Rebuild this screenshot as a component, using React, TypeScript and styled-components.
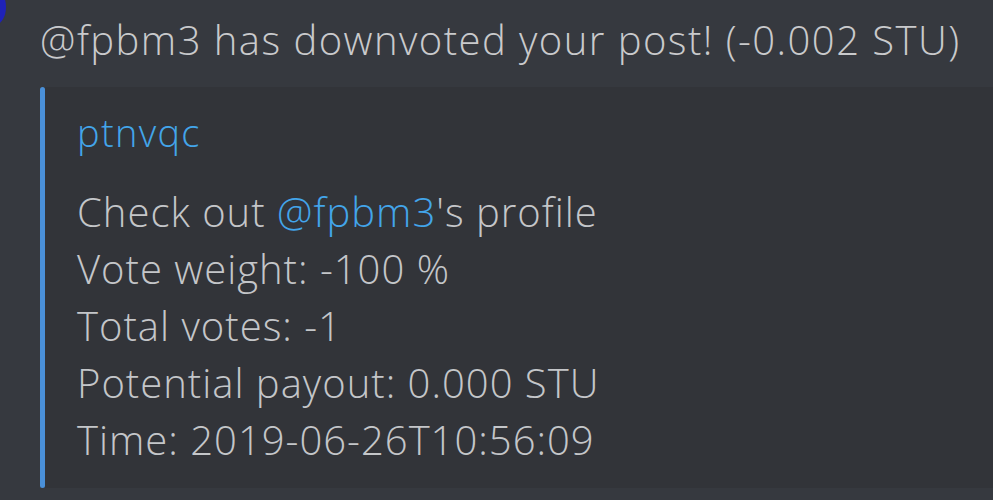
import React from "react";
import styled, { createGlobalStyle } from "styled-components";

const Global = createGlobalStyle`
  html, body { margin: 0; padding: 0; background: #36393f; }
  body { width: 993px; height: 500px; overflow: hidden; }
  #root { height: 500px; }
`;

const Page = styled.div`
  position: relative;
  height: 500px;
  box-sizing: border-box;
  padding: 16px 0 0 40px;
  background: #36393f;
  font-family: "Open Sans", "Noto Sans", sans-serif;
  font-weight: 300;
  color: #c4c6c9;
  overflow: hidden;
`;

const AvatarEdge = styled.div`
  position: absolute;
  left: -14px;
  top: -10px;
  width: 20px;
  height: 34px;
  border-radius: 50%;
  background: #1f22b8;
`;

const Header = styled.div`
  font-size: 40px;
  line-height: 48px;
  letter-spacing: 1.45px;
  white-space: nowrap;
  color: #c9cacc;
`;

const Embed = styled.div`
  margin-top: 23px;
  display: flex;
  height: 401px;
`;

const Bar = styled.div`
  width: 5px;
  flex: none;
  background: #4a90d9;
  border-radius: 3px;
`;

const Body = styled.div`
  flex: 1;
  background: #323439;
  padding: 23px 0 0 32px;
`;

const Title = styled.div`
  font-size: 38px;
  line-height: 44px;
  letter-spacing: 1.3px;
  color: #43a5ea;
  margin-bottom: 29px;
`;

const Line = styled.div`
  font-size: 40px;
  line-height: 57px;
  letter-spacing: 1px;
  white-space: nowrap;
`;

const Mention = styled.span`
  color: #43a5ea;
`;

export default function App() {
  return (
    <>
      <Global />
      <Page>
        <AvatarEdge />
        <Header>@fpbm3 has downvoted your post! (-0.002 STU)</Header>
        <Embed>
          <Bar />
          <Body>
            <Title>ptnvqc</Title>
            <Line>
              Check out <Mention>@fpbm3</Mention>'s profile
            </Line>
            <Line>Vote weight: -100 %</Line>
            <Line>Total votes: -1</Line>
            <Line>Potential payout: 0.000 STU</Line>
            <Line>Time: 2019-06-26T10:56:09</Line>
          </Body>
        </Embed>
      </Page>
    </>
  );
}
